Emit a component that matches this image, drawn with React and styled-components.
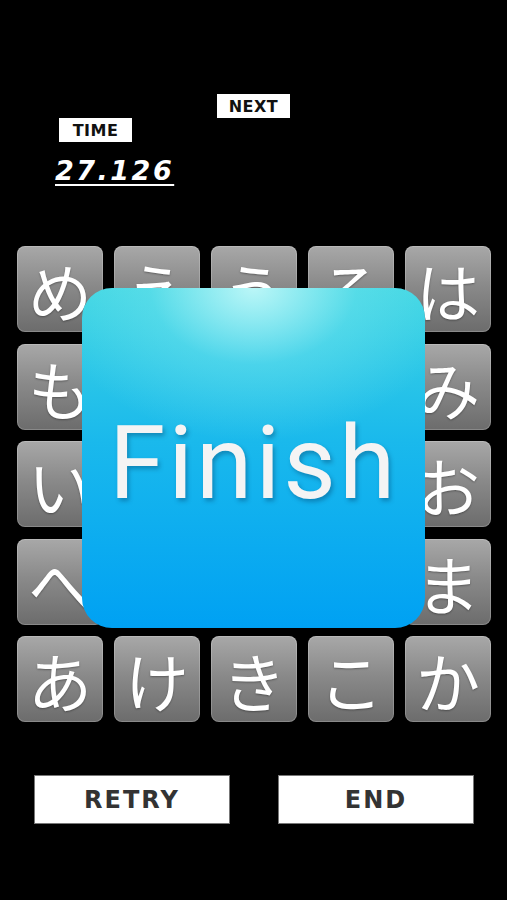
import React from 'react';
import styled, { createGlobalStyle } from 'styled-components';

const Global = createGlobalStyle`
  html, body {
    margin: 0;
    padding: 0;
    background: #000;
  }
  body {
    font-family: 'Noto Sans', 'DejaVu Sans', sans-serif;
  }
`;

const Screen = styled.div`
  width: 507px;
  height: 900px;
  background: #000;
  display: flex;
  flex-direction: column;
  overflow: hidden;
`;

const Header = styled.div`
  height: 246px;
  padding-top: 94px;
  box-sizing: border-box;
  display: flex;
  flex-direction: column;
  align-items: flex-start;
`;

const Label = styled.div`
  margin-left: ${(p) => p.$left}px;
  width: 73px;
  height: 24px;
  background: #fff;
  color: #111;
  font-family: 'DejaVu Sans', sans-serif;
  font-weight: bold;
  font-size: 16px;
  display: flex;
  align-items: center;
  justify-content: center;
  letter-spacing: 0.5px;
`;

const TimeValue = styled.div`
  margin-left: 55px;
  margin-top: 13px;
  color: #fff;
  font-family: 'DejaVu Sans', sans-serif;
  font-weight: bold;
  font-style: italic;
  font-size: 27px;
  letter-spacing: 2.5px;
  text-decoration: underline;
  text-decoration-thickness: 2px;
  text-underline-offset: 4px;
`;

const Board = styled.div`
  position: relative;
  margin-left: 17px;
  display: grid;
  grid-template-columns: repeat(5, 86px);
  grid-auto-rows: 86px;
  column-gap: 11px;
  row-gap: 11.5px;
`;

const Tile = styled.div`
  border-radius: 8px;
  background: linear-gradient(180deg, #a8a8a8 0%, #8a8a8a 45%, #6c6c6c 100%);
  box-shadow: inset 0 0 0 1px rgba(255, 255, 255, 0.2);
  color: #fff;
  font-family: 'Noto Sans CJK JP', sans-serif;
  font-size: 64px;
  line-height: 1;
  display: flex;
  align-items: center;
  justify-content: center;
  text-shadow: 0 1px 2px rgba(0, 0, 0, 0.35);
`;

const Finish = styled.div`
  position: absolute;
  left: 65px;
  top: 42px;
  width: 343px;
  height: 340px;
  border-radius: 30px;
  background:
    radial-gradient(ellipse 60% 45% at 50% 0%, rgba(200, 250, 250, 0.9) 0%, rgba(120, 230, 240, 0.4) 50%, rgba(80, 220, 235, 0) 100%),
    linear-gradient(180deg, #3fd6e2 0%, #1ab9ec 45%, #00a1f3 100%);
  display: flex;
  align-items: center;
  justify-content: center;
  color: #f4f4f4;
  font-family: 'Roboto', 'Noto Sans', sans-serif;
  font-size: 102px;
  padding-top: 10px;
  box-sizing: border-box;
  letter-spacing: 3px;
  text-shadow: 2px 3px 4px rgba(0, 50, 90, 0.35);
`;

const Footer = styled.div`
  margin-top: 53px;
  display: flex;
  gap: 48px;
  padding-left: 34px;
`;

const Button = styled.div`
  width: 196px;
  height: 49px;
  box-sizing: border-box;
  background: #fff;
  border: 1px solid #777;
  display: flex;
  align-items: center;
  justify-content: center;
  color: #333;
  font-family: 'DejaVu Sans', sans-serif;
  font-weight: bold;
  font-size: 24px;
  letter-spacing: 2px;
`;

const kana = [
  'め', 'え', 'う', 'ろ', 'は',
  'も', 'そ', 'ぬ', 'つ', 'み',
  'い', 'な', 'た', 'に', 'お',
  'へ', 'ら', 'の', 'す', 'ま',
  'あ', 'け', 'き', 'こ', 'か',
];

export default function App() {
  return (
    <Screen>
      <Global />
      <Header>
        <Label $left={217}>NEXT</Label>
        <Label $left={59}>TIME</Label>
        <TimeValue>27.126</TimeValue>
      </Header>
      <Board>
        {kana.map((k, i) => (
          <Tile key={i}>{k}</Tile>
        ))}
        <Finish>Finish</Finish>
      </Board>
      <Footer>
        <Button>RETRY</Button>
        <Button>END</Button>
      </Footer>
    </Screen>
  );
}
